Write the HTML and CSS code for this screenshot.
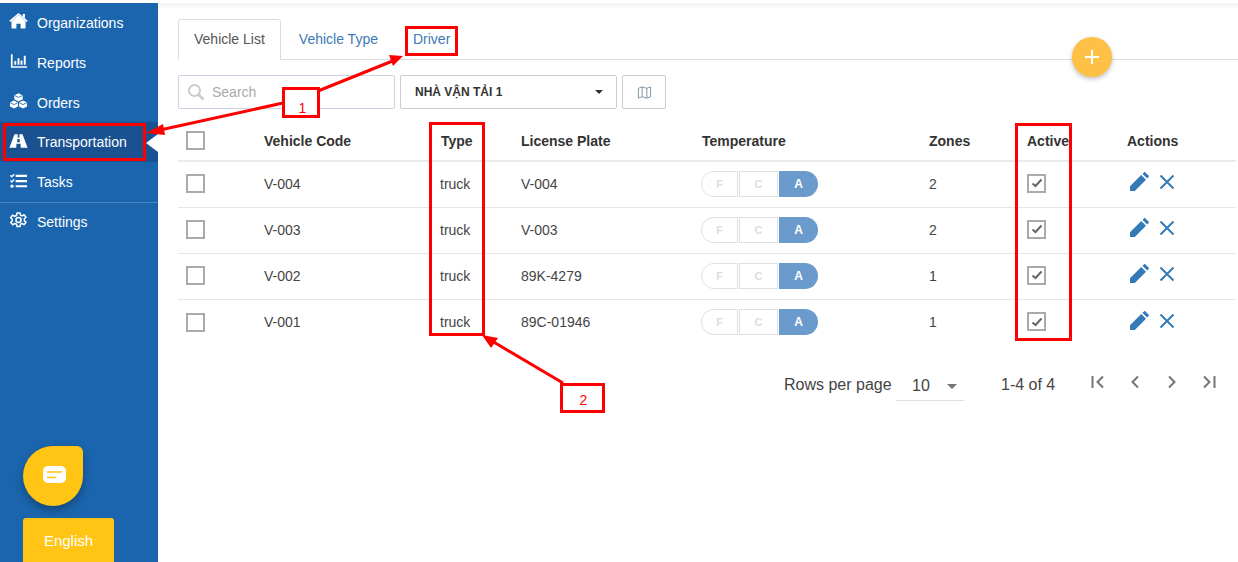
FILE: index.html
```html
<!DOCTYPE html>
<html lang="en">
<head>
<meta charset="utf-8">
<title>Vehicle List</title>
<link rel="stylesheet" href="styles.css">
</head>
<body>
<div class="app">
  <aside class="sidebar">
    <nav class="menu">
      <a class="item"><svg class="ico" viewBox="0 0 20 18"><path fill="#fff" d="M10 2.6 2.6 9v7c0 .5.3.8.8.8h4.4v-5h4.4v5h4.4c.5 0 .8-.3.8-.8V9z"/><path fill="none" stroke="#fff" stroke-width="1.6" d="M.8 9.4 10 1.6l9.2 7.8"/><path fill="#fff" d="M14.4 1.6h2.4v4.6l-2.4-2z"/></svg>Organizations</a>
      <a class="item"><svg class="ico" viewBox="0 0 20 18"><path fill="#fff" d="M2 2h1.8v12.4H19v1.8H2z"/><path fill="#fff" d="M5.6 9h2v4h-2zM9 6h2v7H9zM12.2 8.4h2V13h-2zM15.6 3.6h2V13h-2z"/></svg>Reports</a>
      <a class="item"><svg class="ico" viewBox="0 0 20 18"><path fill="#fff" d="M10 .8 14.4 3v4.2L10 9.4 5.6 7.2V3z"/><path fill="#fff" d="M5.2 8.4 9.4 10.6v4.2L5.2 17 1 14.8v-4.2zM14.8 8.4l4.2 2.2v4.2L14.8 17l-4.2-2.2v-4.2z"/><path fill="none" stroke="#1b65ae" stroke-width=".9" d="M10 5.2 6 3.2M10 5.2l4-2M5.2 12.8l-4-2M5.2 12.8l4-2M14.8 12.8l-4-2M14.8 12.8l4-2"/></svg>Orders</a>
      <a class="item active"><svg class="ico" viewBox="0 0 20 18"><path fill="#fff" d="M5.8 2h3.4l-.2 3.2h2L10.800 2h3.400L19.600 16h-7.200l-.3-4.200H7.900L7.600 16H.4zM8.800 6.800l-.2 3.400h2.800l-.2-3.400z"/></svg>Transportation<span class="caret"></span></a>
      <a class="item"><svg class="ico" viewBox="0 0 20 18"><path fill="none" stroke="#fff" stroke-width="1.500" d="M1.500 3 3 4.500 5.500 1.800M1.500 8.500 3 10 5.500 7.300"/><circle cx="3.200" cy="14.500" r="1.700" fill="#fff"/><path fill="#fff" d="M7 2.500h12v2.200H7zM7 8h12v2.200H7zM7 13.400h12v2.200H7z"/></svg>Tasks</a>
      <div class="divider"></div>
      <a class="item"><svg class="ico" viewBox="0 0 24 24"><path fill="none" stroke="#fff" stroke-width="2" stroke-linejoin="round" d="M10 2.500h4l.6 3 2.200 1 2.700-1.500 2.500 3.300-2.200 2.100v2.400l2.200 2.100-2.500 3.300-2.700-1.500-2.200 1-.6 3h-4l-.6-3-2.200-1-2.700 1.500L1.500 15.400l2.200-2.100v-2.400L1.500 8.800 4 5.500 6.700 7l2.700-1z"/><circle cx="12" cy="12" r="3.400" fill="none" stroke="#fff" stroke-width="2"/></svg>Settings</a>
    </nav>
    <div class="side-foot">
      <button class="chat"><svg viewBox="0 0 23 17" width="23" height="17"><rect x="0" y="0" width="23" height="17" rx="5" fill="#fff"/><path d="M4 6h15M4 11.500h9" stroke="#ffc414" stroke-width="1.600"/></svg></button>
      <button class="lang">English</button>
    </div>
  </aside>

  <main class="content">
    <div class="tabs">
      <a class="tab current">Vehicle List</a>
      <a class="tab">Vehicle Type</a>
      <a class="tab">Driver</a>
    </div>
    <button class="fab"><svg viewBox="0 0 16 16" width="16" height="16"><path d="M8 1v14M1 8h14" stroke="#fff" stroke-width="2"/></svg></button>

    <div class="toolbar">
      <label class="search"><svg viewBox="0 0 18 18" width="18" height="18"><circle cx="7.500" cy="7.500" r="5.500" fill="none" stroke="#ccc" stroke-width="2"/><path d="m11.500 11.500 5 5" stroke="#ccc" stroke-width="2.600"/></svg><span>Search</span></label>
      <div class="select"><span>NHÀ VẬN TẢI 1</span><i class="tri"></i></div>
      <button class="mapbtn"><svg viewBox="0 0 16 16" width="15" height="15"><path fill="none" stroke="#7c929f" stroke-width="1" stroke-linejoin="round" d="M1.500 3.500 5.500 2l5 1.500 4-1.500v10.500l-4 1.500-5-1.500-4 1.500zM5.500 2v10.500M10.500 3.500V14"/></svg></button>
    </div>

    <div class="table">
      <div class="row head">
        <div class="c-check"><span class="box"></span></div>
        <div>Vehicle Code</div><div class="type-h">Type</div><div>License Plate</div><div>Temperature</div><div>Zones</div><div>Active</div><div>Actions</div>
      </div>
      <div class="row">
        <div class="c-check"><span class="box"></span></div>
        <div>V-004</div><div>truck</div><div>V-004</div>
        <div class="temp"><span class="t f">F</span><span class="t">C</span><span class="t a">A</span></div>
        <div>2</div>
        <div><span class="box checked"><svg viewBox="0 0 12 10" width="12" height="10"><path d="M1.500 5.500 4.500 8 10.500 1.500" fill="none" stroke="#666" stroke-width="2"/></svg></span></div>
        <div class="acts"><svg class="pen" viewBox="0 0 20 20" width="20" height="20"><path fill="#337ab7" d="M1 19v-4.800L12.200 3l4.800 4.800L5.800 19zM13.400 1.800 15 .4c.4-.4 1-.4 1.400 0l3.200 3.200c.4.4.4 1 0 1.400l-1.400 1.600z"/></svg><svg class="del" viewBox="0 0 16 16" width="16" height="16"><path d="M1.500 1.500l13 13M14.500 1.500l-13 13" stroke="#337ab7" stroke-width="2" fill="none"/></svg></div>
      </div>
      <div class="row">
        <div class="c-check"><span class="box"></span></div>
        <div>V-003</div><div>truck</div><div>V-003</div>
        <div class="temp"><span class="t f">F</span><span class="t">C</span><span class="t a">A</span></div>
        <div>2</div>
        <div><span class="box checked"><svg viewBox="0 0 12 10" width="12" height="10"><path d="M1.500 5.500 4.500 8 10.500 1.500" fill="none" stroke="#666" stroke-width="2"/></svg></span></div>
        <div class="acts"><svg class="pen" viewBox="0 0 20 20" width="20" height="20"><path fill="#337ab7" d="M1 19v-4.800L12.200 3l4.800 4.800L5.800 19zM13.400 1.800 15 .4c.4-.4 1-.4 1.400 0l3.200 3.200c.4.4.4 1 0 1.400l-1.400 1.600z"/></svg><svg class="del" viewBox="0 0 16 16" width="16" height="16"><path d="M1.500 1.500l13 13M14.500 1.500l-13 13" stroke="#337ab7" stroke-width="2" fill="none"/></svg></div>
      </div>
      <div class="row">
        <div class="c-check"><span class="box"></span></div>
        <div>V-002</div><div>truck</div><div>89K-4279</div>
        <div class="temp"><span class="t f">F</span><span class="t">C</span><span class="t a">A</span></div>
        <div>1</div>
        <div><span class="box checked"><svg viewBox="0 0 12 10" width="12" height="10"><path d="M1.500 5.500 4.500 8 10.500 1.500" fill="none" stroke="#666" stroke-width="2"/></svg></span></div>
        <div class="acts"><svg class="pen" viewBox="0 0 20 20" width="20" height="20"><path fill="#337ab7" d="M1 19v-4.800L12.200 3l4.800 4.800L5.800 19zM13.400 1.800 15 .4c.4-.4 1-.4 1.400 0l3.200 3.200c.4.4.4 1 0 1.400l-1.400 1.600z"/></svg><svg class="del" viewBox="0 0 16 16" width="16" height="16"><path d="M1.500 1.500l13 13M14.500 1.500l-13 13" stroke="#337ab7" stroke-width="2" fill="none"/></svg></div>
      </div>
      <div class="row last">
        <div class="c-check"><span class="box"></span></div>
        <div>V-001</div><div>truck</div><div>89C-01946</div>
        <div class="temp"><span class="t f">F</span><span class="t">C</span><span class="t a">A</span></div>
        <div>1</div>
        <div><span class="box checked"><svg viewBox="0 0 12 10" width="12" height="10"><path d="M1.500 5.500 4.500 8 10.500 1.500" fill="none" stroke="#666" stroke-width="2"/></svg></span></div>
        <div class="acts"><svg class="pen" viewBox="0 0 20 20" width="20" height="20"><path fill="#337ab7" d="M1 19v-4.800L12.200 3l4.800 4.800L5.800 19zM13.400 1.800 15 .4c.4-.4 1-.4 1.400 0l3.200 3.200c.4.4.4 1 0 1.400l-1.400 1.600z"/></svg><svg class="del" viewBox="0 0 16 16" width="16" height="16"><path d="M1.500 1.500l13 13M14.500 1.500l-13 13" stroke="#337ab7" stroke-width="2" fill="none"/></svg></div>
      </div>
    </div>

    <div class="pager">
      <span class="rpp">Rows per page</span>
      <div class="rows-sel"><span>10</span><i class="tri grey"></i></div>
      <span class="range">1-4 of 4</span>
      <div class="nav">
        <svg viewBox="0 0 16 16" width="16" height="16"><path d="M2.500 2v12M13 2.500 7.500 8l5.500 5.500" fill="none" stroke="#757575" stroke-width="2"/></svg>
        <svg viewBox="0 0 16 16" width="16" height="16"><path d="M11 2.500 5.500 8l5.500 5.500" fill="none" stroke="#757575" stroke-width="2"/></svg>
        <svg viewBox="0 0 16 16" width="16" height="16"><path d="M5 2.500 10.500 8 5 13.500" fill="none" stroke="#757575" stroke-width="2"/></svg>
        <svg viewBox="0 0 16 16" width="16" height="16"><path d="M13.500 2v12M3 2.500 8.500 8 3 13.500" fill="none" stroke="#757575" stroke-width="2"/></svg>
      </div>
    </div>
  </main>

  <div class="annot">
    <svg class="arrows" width="1238" height="562" viewBox="0 0 1238 562">
      <g stroke="#f00" stroke-width="3" fill="none">
        <path d="M283 103 160 130"/>
        <path d="M318 91 395 60"/>
        <path d="M563 383 492 341"/>
      </g>
      <g fill="#f00">
        <path d="M146 133 163 124 165 135z"/>
        <path d="M403 56 389 55 393 66z"/>
        <path d="M482 335 498 338 491 348z"/>
      </g>
    </svg>
    <div class="mark m-trans"></div>
    <div class="mark m-driver"></div>
    <div class="mark m-type"></div>
    <div class="mark m-active"></div>
    <div class="mark m-one">1</div>
    <div class="mark m-two">2</div>
  </div>
</div>
</body>
</html>
```

FILE: styles.css
```css
* { box-sizing: border-box; }
html, body { margin: 0; padding: 0; }
body { font-family: "Liberation Sans", Arial, sans-serif; font-size: 14px; color: #333; background: #fff; }
button { font-family: inherit; border: 0; padding: 0; }

.app { position: relative; display: flex; width: 1238px; height: 562px; overflow: hidden; padding-top: 3px; }

.sidebar { width: 158px; flex: none; background: #1b65ae; display: flex; flex-direction: column; justify-content: space-between; color: #fff; }
.menu { display: flex; flex-direction: column; }
.item { position: relative; display: flex; align-items: center; height: 39.800px; padding: 0.200px 0 0 9px; color: #fff; font-size: 14px; }
.ico { width: 19px; height: 18px; margin-right: 9px; flex: none; margin-top: -3px; }
.item.active { background: #1a5291; }
.caret { position: absolute; right: 0; top: 12px; border: 8px solid transparent; border-right: 12px solid #fff; border-left: 0; border-top-width: 9px; border-bottom-width: 9px; }
.divider { height: 1px; margin-bottom: -1px; background: #4a84bf; }

.side-foot { display: flex; flex-direction: column; align-items: flex-start; padding-left: 23px; gap: 12px; }
.chat { width: 60px; height: 60px; padding: 0 0 3px 3px; background: #ffc414; border-radius: 50% 6px 50% 50%; box-shadow: 0 4px 8px rgba(0,0,0,.3); display: flex; align-items: center; justify-content: center; }
.lang { width: 91px; height: 44px; background: #ffc414; color: #fff; font-size: 15px; border-radius: 3px 3px 0 0; }

.content { position: relative; flex: 1; padding: 16px 2px 0 20px; min-width: 0; background: linear-gradient(#f1f1f1, #fff 6px) no-repeat top / 100% 6px; }

.tabs { display: flex; height: 41px; border-bottom: 1px solid #ddd; margin-right: -2px; }
.tab { height: 41px; padding: 12px 16px 0; color: #3f7ab5; font-size: 14px; margin-right: 3px; }
.tab.current { color: #555; background: #fff; border: 1px solid #ddd; border-bottom-color: #fff; border-radius: 3px 3px 0 0; padding: 11px 15px 0; margin-right: 2px; }

.fab { position: absolute; left: 914px; top: 34px; width: 40px; height: 40px; border-radius: 50%; background: #ffc145; box-shadow: 0 2px 5px rgba(0,0,0,.25); display: flex; align-items: center; justify-content: center; }

.toolbar { display: flex; margin-top: 15px; gap: 5px; height: 34px; }
.search { width: 217px; border: 1px solid #ccd3e0; border-radius: 2px; display: flex; align-items: center; gap: 7px; padding-left: 8px; color: #aaa; }
.select { width: 217px; border: 1px solid #ccc; border-radius: 2px; display: flex; align-items: center; justify-content: space-between; padding: 0 11px 0 14px; font-size: 12px; font-weight: 700; color: #333; }
.tri { width: 0; height: 0; border: 4px solid transparent; border-top: 4px solid #333; border-bottom: 0; margin-right: 2px; }
.tri.grey { border-width: 5px; border-bottom: 0; border-top-color: #757575; margin-right: 0; }
.mapbtn { width: 44px; background: #fff; border: 1px solid #ccc; border-radius: 2px; display: flex; align-items: center; justify-content: center; }

.table { margin-top: 13px; }
.row { display: grid; grid-template-columns: 86px 176px 81px 181px 227px 98px 100px 109px; height: 46px; padding-bottom: 2px; align-items: center; border-bottom: 1px solid #e6e6e6; font-size: 14px; color: #444; }
.row.head { height: 40px; padding-bottom: 1px; border-bottom: 2px solid #e8ebef; font-weight: 700; color: #333; }
.row.last { border-bottom: 0; }
.type-h { padding-left: 1px; }
.c-check { padding-left: 8px; display: flex; }
.box { display: flex; align-items: center; justify-content: center; width: 19px; height: 19px; border: 2px solid #aaa; background: #fff; }
.box.checked { margin-top: -1px; }

.temp { display: flex; gap: 1px; margin-left: -1px; }
.t { width: 39px; height: 26px; border: 1px solid #e0e0e0; display: flex; align-items: center; justify-content: center; color: #ddd; font-size: 11px; font-weight: 700; }
.t.f { width: 37px; border-radius: 13px 0 0 13px; }
.t.a { background: #6b9acd; border: 0; color: #fff; border-radius: 0 13px 13px 0; font-size: 12px; }

.acts { display: flex; align-items: center; gap: 10px; padding-left: 2px; margin-top: -3px; }

.pager { display: flex; align-items: center; height: 44px; margin-top: 17px; color: #444; font-size: 16px; padding-left: 606px; }
.rpp { width: 112px; }
.rows-sel { width: 68px; height: 31px; border-bottom: 1px solid #e0e0e0; display: flex; align-items: center; justify-content: space-between; padding: 2px 7px 0 16px; margin-top: 1px; }
.range { margin-left: 37px; width: 90px; margin-top: -1px; }
.nav { display: flex; gap: 21px; margin-left: -1px; margin-top: -6px; }

.annot { position: absolute; inset: 0; pointer-events: none; }
.arrows { position: absolute; left: 0; top: 0; }
.mark { position: absolute; border: 3px solid #f00; color: #f00; font-size: 14px; text-align: center; }
.m-trans { left: 3px; top: 123px; width: 143px; height: 38px; }
.m-driver { left: 405px; top: 26px; width: 53px; height: 30px; }
.m-type { left: 429px; top: 122px; width: 56px; height: 214px; }
.m-active { left: 1015px; top: 123px; width: 57px; height: 218px; }
.m-one { left: 282px; top: 87px; width: 38px; height: 31px; padding: 10px 0 0 3px; line-height: 16px; background: #fff; }
.m-two { left: 560px; top: 383px; width: 45px; height: 30px; padding: 6px 0 0 2px; line-height: 16px; background: #fff; }
```
